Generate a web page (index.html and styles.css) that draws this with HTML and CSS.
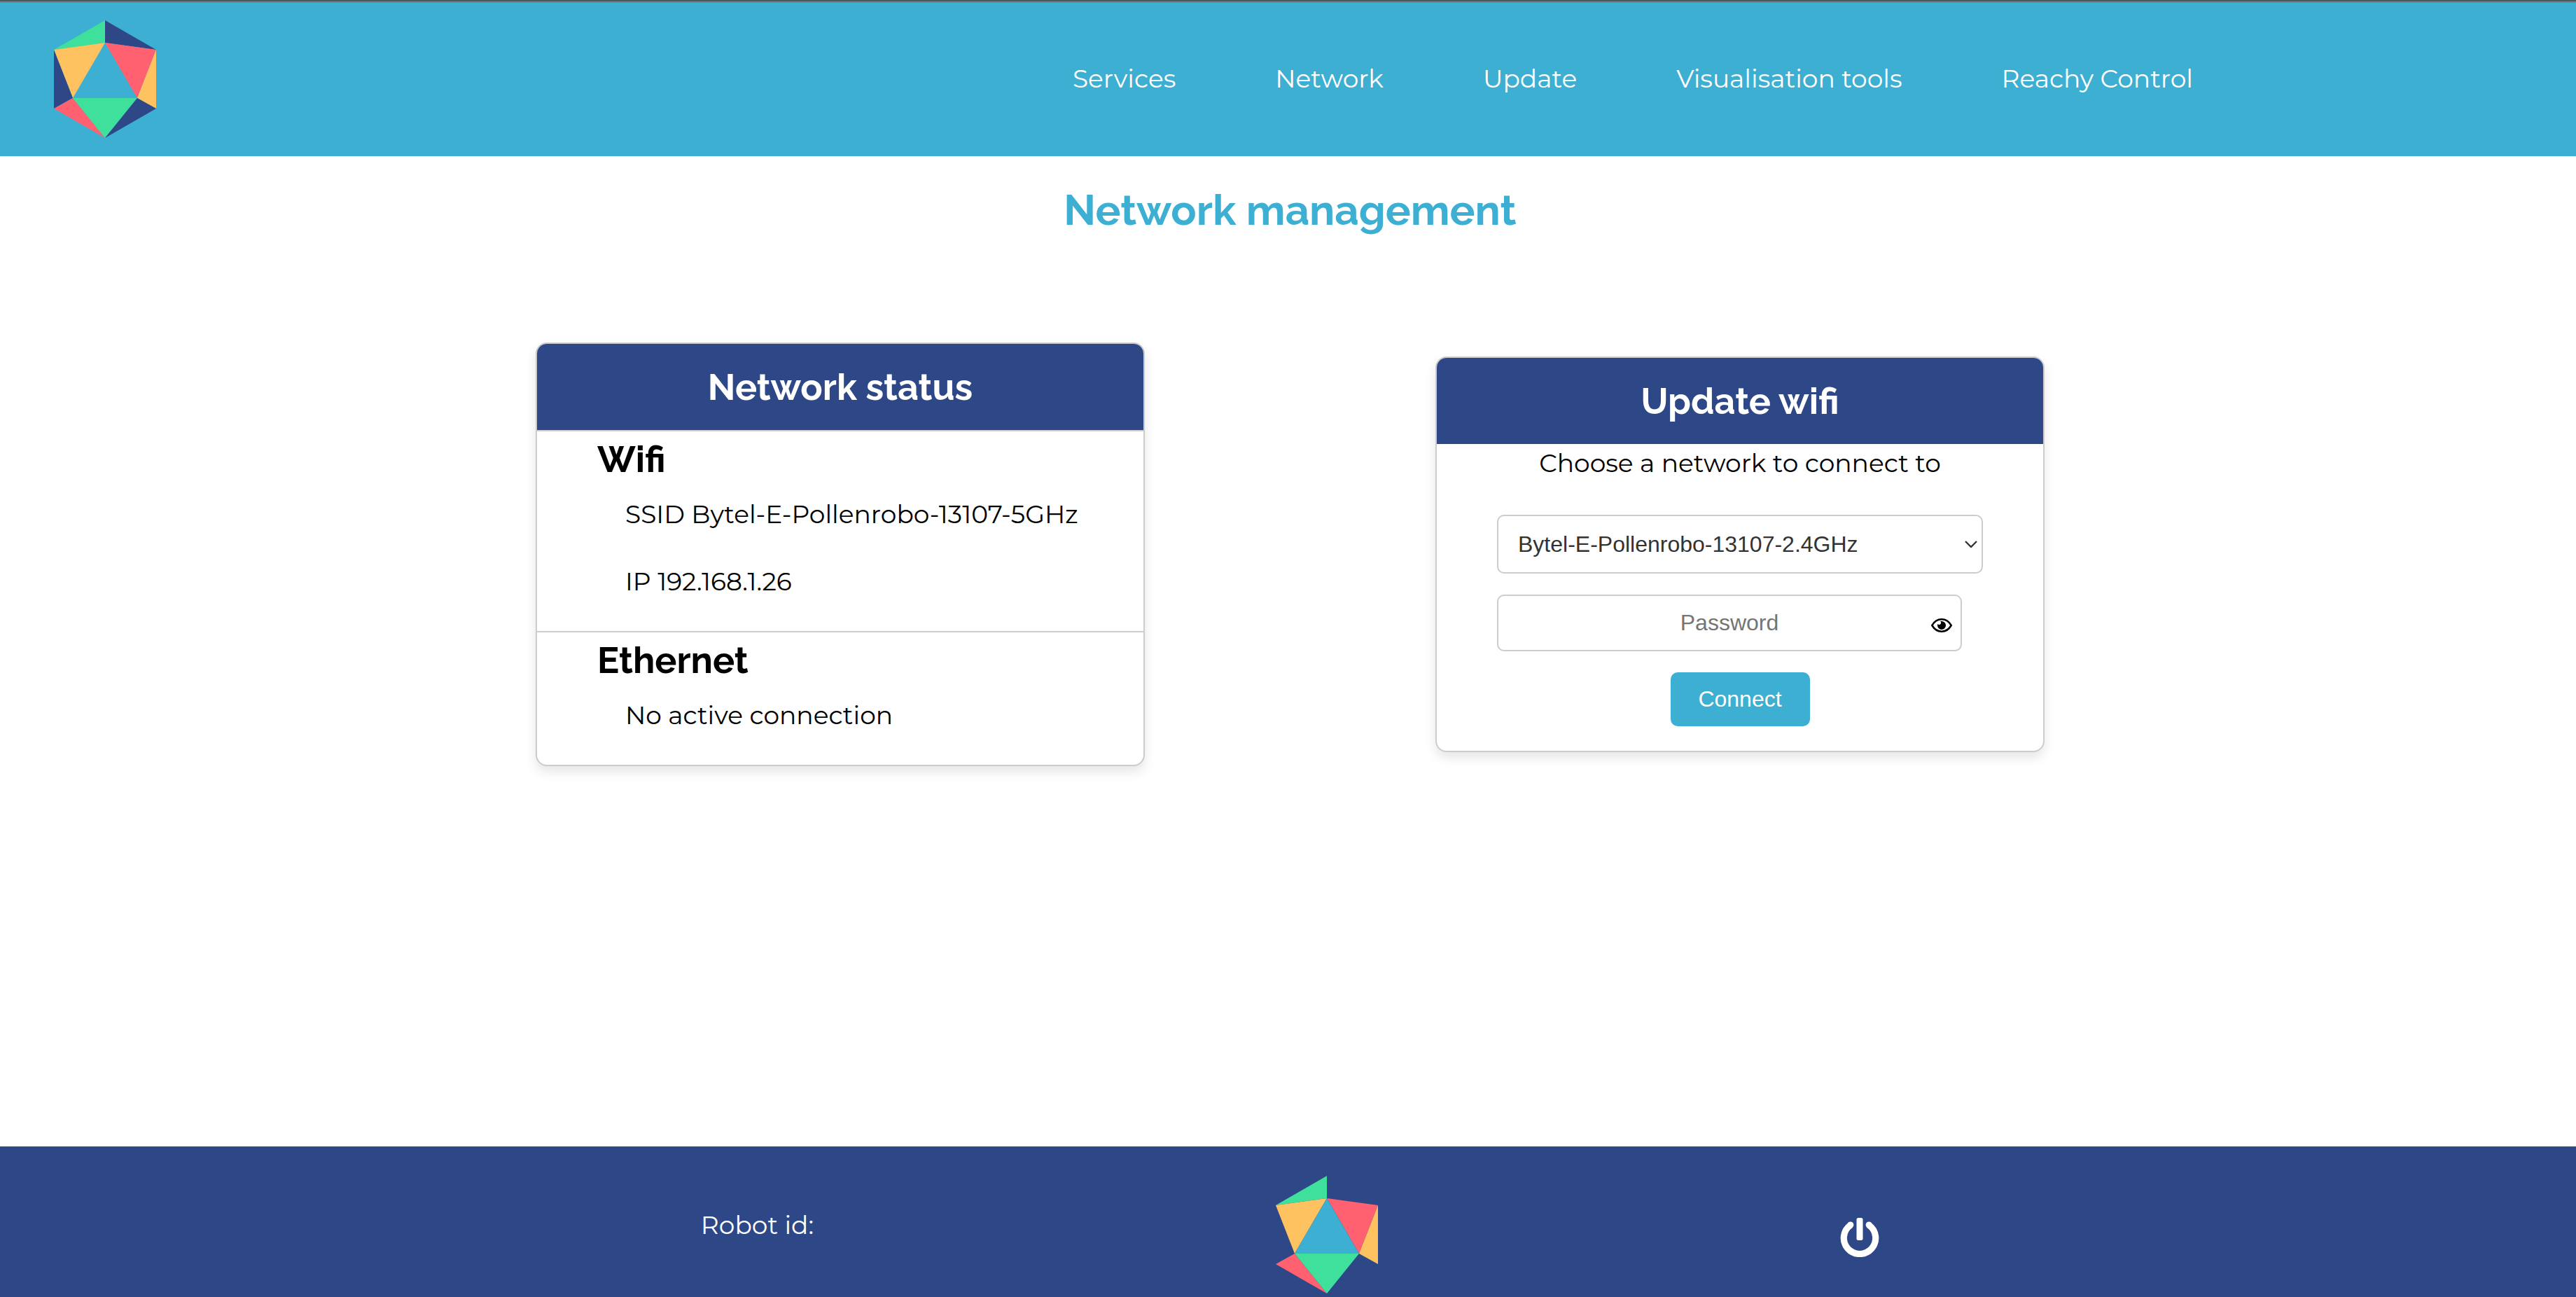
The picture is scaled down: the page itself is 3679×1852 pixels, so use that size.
FILE: index.html
```html
<!DOCTYPE html>
<html lang="en">
<head>
  <meta charset="utf-8">
  <meta name="viewport" content="width=device-width, initial-scale=1">
  <title>Network management</title>
  <link rel="stylesheet" href="styles.css">
</head>
<body>
  <header class="site-header">
    <a class="logo-link" href="#" aria-label="Home">
      <svg class="logo" viewBox="0 0 146 168" aria-hidden="true">
        <path fill="#3fe09b" d="M73 0V32L0 42Z"/>
        <path fill="#2e4786" d="M73 0L146 42L73 32Z"/>
        <path fill="#ffc261" d="M0 42L73 32L27 111Z"/>
        <path fill="#ff6170" d="M73 32L146 42L119 111Z"/>
        <path fill="#2e4786" d="M0 42L27 111L0 126Z"/>
        <path fill="#ffc261" d="M146 42V126L119 111Z"/>
        <path fill="#ff6170" d="M27 111L73 168L0 126Z"/>
        <path fill="#3fe09b" d="M27 111H119L73 168Z"/>
        <path fill="#2e4786" d="M119 111L146 126L73 168Z"/>
      </svg>
    </a>
    <nav class="main-nav">
      <a href="#">Services</a>
      <a href="#">Network</a>
      <a href="#">Update</a>
      <a href="#">Visualisation tools</a>
      <a href="#">Reachy Control</a>
    </nav>
  </header>

  <main class="content">
    <h1 class="page-title">Network management</h1>

    <div class="cards">
      <section class="card">
        <h2 class="card-title card-title-ruled">Network status</h2>
        <div class="status">
          <h3 class="status-name">Wifi</h3>
          <p class="status-detail">SSID Bytel-E-Pollenrobo-13107-5GHz</p>
          <p class="status-detail">IP 192.168.1.26</p>
        </div>
        <div class="status">
          <h3 class="status-name">Ethernet</h3>
          <p class="status-detail">No active connection</p>
        </div>
      </section>

      <section class="card">
        <h2 class="card-title">Update wifi</h2>
        <form class="wifi-form">
          <label class="form-label" for="network">Choose a network to connect to</label>
          <div class="field">
            <select class="control select" id="network">
              <option>Bytel-E-Pollenrobo-13107-2.4GHz</option>
            </select>
            <svg class="chevron" viewBox="0 0 18 10" aria-hidden="true"><path d="M1 1L9 9L17 1" fill="none" stroke="#333" stroke-width="2.4"/></svg>
          </div>
          <div class="field field-password">
            <input class="control password" type="password" placeholder="Password" aria-label="Password">
            <button class="reveal" type="button" aria-label="Show password">
              <svg viewBox="0 0 30 20" aria-hidden="true">
                <path d="M1.3 10C4.5 4.500 9.500 1.300 15 1.300S25.500 4.500 28.700 10C25.500 15.500 20.500 18.700 15 18.700S4.500 15.500 1.300 10Z" fill="none" stroke="#000" stroke-width="2.5"/>
                <path d="M15 4A6 6 0 1 1 9 10C9 9.300 9.100 8.700 9.300 8.100C10 8.900 11.200 9.300 12.300 8.900C13.800 8.500 14.500 7 14 5.600C13.800 5 13.500 4.600 13.100 4.300C13.700 4.100 14.300 4 15 4Z"/>
              </svg>
            </button>
          </div>
          <button class="connect" type="submit">Connect</button>
        </form>
      </section>
    </div>
  </main>

  <footer class="site-footer">
    <p class="robot-id">Robot id:</p>
    <svg class="logo" viewBox="0 0 146 168" aria-hidden="true">
      <path fill="#3fe09b" d="M73 0V32L0 42Z"/>
      <path fill="#ffc261" d="M0 42L73 32L27 111Z"/>
      <path fill="#ff6170" d="M73 32L146 42L119 111Z"/>
      <path fill="#ffc261" d="M146 42V126L119 111Z"/>
      <path fill="#3dafd2" d="M73 32L119 111H27Z"/>
      <path fill="#ff6170" d="M27 111L73 168L0 126Z"/>
      <path fill="#3fe09b" d="M27 111H119L73 168Z"/>
    </svg>
    <button class="power" type="button" aria-label="Power off">
      <svg viewBox="0 0 56 56" aria-hidden="true">
        <path d="M15 10.200A22.700 22.700 0 1 0 41 10.200" fill="none" stroke="#fff" stroke-width="9.200"/>
        <circle cx="14.800" cy="10" r="4.600" fill="#fff"/>
        <circle cx="41.200" cy="10" r="4.600" fill="#fff"/>
        <rect x="23.500" y="0" width="9" height="32" rx="2.500" fill="#fff"/>
      </svg>
    </button>
  </footer>
</body>
</html>
```
FILE: styles.css
```css
:root {
  --sky: #3dafd2;
  --navy: #2e4786;
  --line: #ccc;
}

* {
  box-sizing: border-box;
}

body {
  margin: 0;
  min-height: 100vh;
  display: flex;
  flex-direction: column;
  background: #fff;
  color: #000;
  font: 400 36px/46px Montserrat, Inter, sans-serif;
}

h1, h2, h3, p {
  margin: 0;
}

h1, h2, h3 {
  font-family: Raleway, Inter, sans-serif;
  font-weight: 700;
}

button {
  border: 0;
  padding: 0;
  background: none;
  cursor: pointer;
}

svg {
  display: block;
}

.logo {
  width: 146px;
  height: 168px;
}

/* Header */
.site-header {
  display: flex;
  align-items: center;
  justify-content: space-between;
  padding: 27px 547px 26px 77px;
  border-top: 2px solid #465a62;
  background: var(--sky);
  box-shadow: inset 0 2px #7a8287;
}

.main-nav {
  display: flex;
  gap: 142px;
  margin-bottom: 2px;
}

.main-nav a {
  color: #fff;
  text-decoration: none;
  white-space: nowrap;
}

/* Content */
.content {
  flex: 1;
  padding: 40px 74px 40px 80px;
}

.page-title {
  color: var(--sky);
  font-size: 60px;
  line-height: 74px;
  text-align: center;
}

.cards {
  display: flex;
  flex-wrap: wrap;
  align-items: center;
  justify-content: center;
  gap: 60px 415px;
  margin-top: 152px;
}

.card {
  width: 870px;
  max-width: 100%;
  overflow: hidden;
  border: 2px solid var(--line);
  border-radius: 16px;
  background: #fff;
  box-shadow: 0 8px 16px rgba(0, 0, 0, 0.1);
}

.card-title {
  padding: 31px;
  background: var(--navy);
  color: #fff;
  font-size: 52px;
  line-height: 61px;
  text-align: center;
}

.card-title-ruled {
  border-bottom: 2px solid var(--line);
}

.status {
  padding: 10px 86px 48px;
}

.status + .status {
  border-top: 2px solid var(--line);
}

.status-name {
  font-size: 52px;
  line-height: 60px;
}

.status-detail {
  margin: 25px 0 0 40px;
  white-space: nowrap;
}

.status-detail + .status-detail {
  margin-top: 50px;
}

/* Wifi form */
.wifi-form {
  display: flex;
  flex-direction: column;
  align-items: center;
  gap: 30px;
  padding: 4px 86px 35px;
}

.form-label {
  margin-bottom: 21px;
}

.field {
  position: relative;
  width: 100%;
}

.field-password {
  padding-right: 30px;
}

.control {
  display: block;
  width: 100%;
  height: 81px;
  border: 2px solid var(--line);
  border-radius: 10px;
  background: #fff;
  color: #333;
  font: 32px "Liberation Sans", Arial, sans-serif;
}

.select {
  height: 84px;
  padding: 0 28px;
  appearance: none;
}

.chevron {
  position: absolute;
  top: 37px;
  right: 8px;
  width: 18px;
  height: 10px;
  pointer-events: none;
}

.password {
  padding: 0 28px;
  text-align: center;
}

.password::placeholder {
  color: #757575;
}

.reveal {
  position: absolute;
  top: 34px;
  right: 44px;
  width: 30px;
  height: 20px;
}

.connect {
  width: 199px;
  height: 77px;
  border-radius: 10px;
  background: var(--sky);
  color: #fff;
  font: 32px "Liberation Sans", Arial, sans-serif;
}

/* Footer */
.site-footer {
  display: flex;
  align-items: center;
  justify-content: center;
  gap: 660px;
  padding: 42px 74px 5px 80px;
  background: var(--navy);
  color: #fff;
}

.robot-id {
  margin-bottom: 28px;
  white-space: nowrap;
}

.power {
  width: 56px;
  height: 56px;
  margin-top: 8px;
}
```
